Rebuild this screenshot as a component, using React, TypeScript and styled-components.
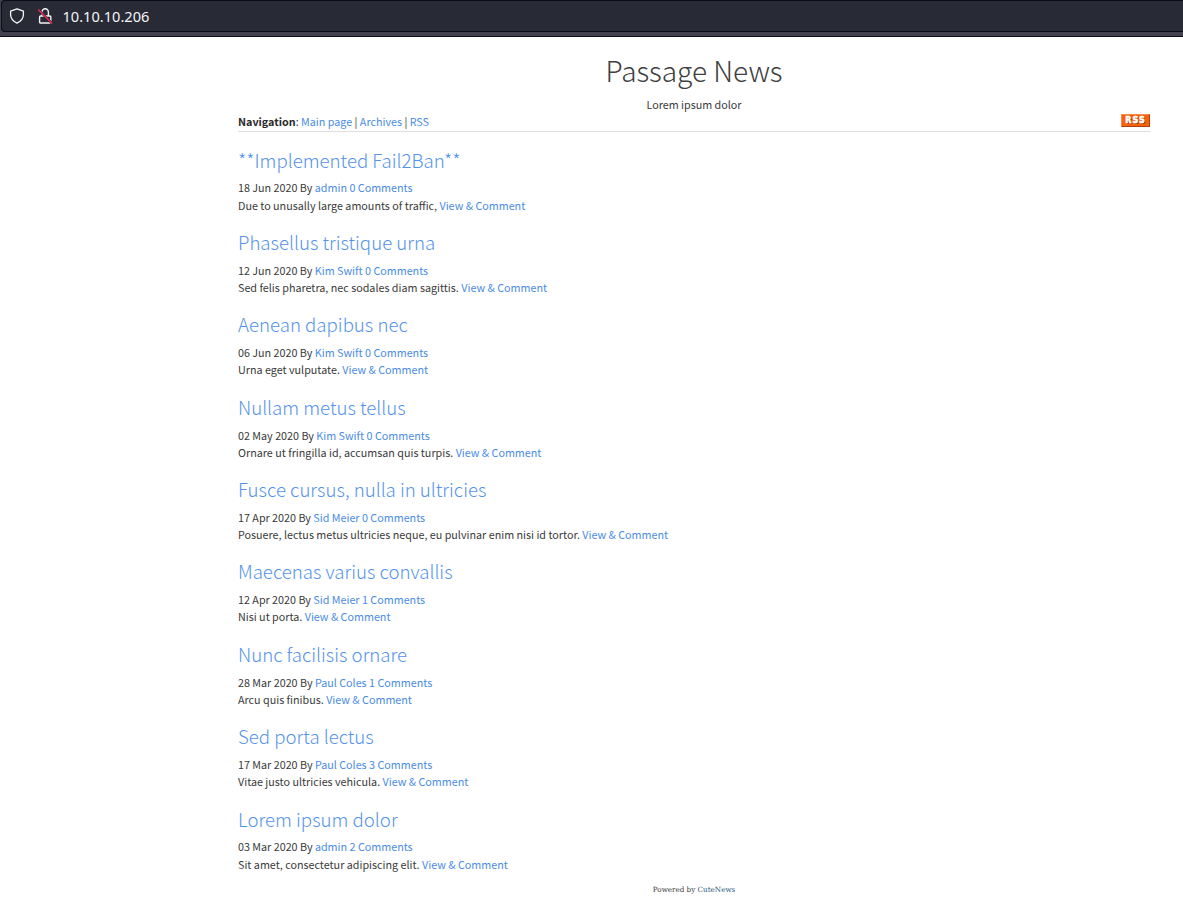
import React from 'react';
import styled, {createGlobalStyle} from 'styled-components';

const GlobalStyle = createGlobalStyle`
  * {
    box-sizing: border-box;
  }

  body {
    margin: 0;
    background: #fff;
    color: #3a3a3a;
    font: 400 10.75px/17.3px 'Noto Sans CJK JP', 'Open Sans', sans-serif;
  }
`;

const AddressBar = styled.div`
  height: 37px;
  padding-left: 1px;
  background: #42414d;
  border-bottom: 1px solid #0c0e1a;
`;

const AddressField = styled.div`
  display: flex;
  align-items: center;
  height: 32px;
  padding: 0 0 0 7px;
  background: #282a36;
  border: 1px solid #0a0c18;
  border-right: 0;
  border-radius: 4px 0 0 4px;
  color: #f4f4f6;
`;

const ShieldIcon = styled.svg`
  width: 16px;
  height: 16px;
`;

const LockIcon = styled.svg`
  width: 16px;
  height: 16px;
  margin: 0 9.5px 0 12px;
`;

const Address = styled.span`
  padding-bottom: 1px;
  font: 14.6px/20px 'Noto Sans', sans-serif;
`;

const Page = styled.main`
  width: 912px;
  margin-left: 238px;
`;

const Header = styled.header`
  padding-top: 13px;
  text-align: center;
`;

const SiteTitle = styled.h1`
  margin: 0;
  color: #404040;
  font-size: 28px;
  font-weight: 300;
  line-height: 40px;
`;

const Tagline = styled.p`
  margin: 6px 0 0;
`;

const Navigation = styled.nav`
  display: flex;
  justify-content: space-between;
  height: 19px;
  border-bottom: 1px solid #ddd;

  b {
    color: #2a2a2a;
  }
`;

const Link = styled.a`
  color: #4a8ce4;
  text-decoration: none;
`;

const RssBadge = styled.span`
  display: flex;
  align-items: center;
  justify-content: center;
  width: 29px;
  height: 13px;
  margin-top: 1px;
  padding-top: 1px;
  background: #f9610c;
  border: 1px solid;
  border-color: #f58a4c #a8440c #a8440c #f58a4c;
  color: #fff;
  font: 700 8px/10px 'DejaVu Sans', sans-serif;
  letter-spacing: 1px;
  text-shadow: 1px 1px 0 #8f3a0c;
  -webkit-text-stroke: 0.5px #fff;
`;

const News = styled.section`
  display: flex;
  flex-direction: column;
  gap: 13.19px;
  padding-top: 12.3px;
`;

const Article = styled.article``;

const ArticleTitle = styled.h2`
  margin: 0 0 4.845px;
  font-size: 18.65px;
  font-weight: 300;
  line-height: 30px;

  a {
    color: #5593ec;
  }
`;

const Line = styled.p`
  margin: 0;
  line-height: 17.175px;
  white-space: nowrap;
`;

const Footer = styled.footer`
  padding-top: 11.03px;
  text-align: center;
  font: 7.2px/12px 'DejaVu Serif', serif;

  a {
    color: #2b587a;
  }
`;

const articles = [
  {title: '**Implemented Fail2Ban**', date: '18 Jun 2020', author: 'admin', comments: 0, text: 'Due to unusally large amounts of traffic,'},
  {title: 'Phasellus tristique urna', date: '12 Jun 2020', author: 'Kim Swift', comments: 0, text: 'Sed felis pharetra, nec sodales diam sagittis.'},
  {title: 'Aenean dapibus nec', date: '06 Jun 2020', author: 'Kim Swift', comments: 0, text: 'Urna eget vulputate.'},
  {title: 'Nullam metus tellus', date: '02 May 2020', author: 'Kim Swift', comments: 0, text: 'Ornare ut fringilla id, accumsan quis turpis.'},
  {title: 'Fusce cursus, nulla in ultricies', date: '17 Apr 2020', author: 'Sid Meier', comments: 0, text: 'Posuere, lectus metus ultricies neque, eu pulvinar enim nisi id tortor.'},
  {title: 'Maecenas varius convallis', date: '12 Apr 2020', author: 'Sid Meier', comments: 1, text: 'Nisi ut porta.'},
  {title: 'Nunc facilisis ornare', date: '28 Mar 2020', author: 'Paul Coles', comments: 1, text: 'Arcu quis finibus.'},
  {title: 'Sed porta lectus', date: '17 Mar 2020', author: 'Paul Coles', comments: 3, text: 'Vitae justo ultricies vehicula.'},
  {title: 'Lorem ipsum dolor', date: '03 Mar 2020', author: 'admin', comments: 2, text: 'Sit amet, consectetur adipiscing elit.'},
];

const App = () => (
  <>
    <GlobalStyle />
    <AddressBar>
      <AddressField>
        <ShieldIcon viewBox="0 0 16 16" fill="none" stroke="currentColor" strokeWidth="1.3" strokeLinejoin="round">
          <path d="M8 .8 14.4 3.2v3.6c0 3.7-2.4 6.4-6.4 8.4-4-2-6.4-4.7-6.4-8.4V3.2z" />
        </ShieldIcon>
        <LockIcon viewBox="0 0 16 16" fill="none" stroke="currentColor" strokeWidth="1.4">
          <path d="M5 8V4a3.2 3.2 0 0 1 6.4 0v4" />
          <rect x="2.6" y="8" width="11.2" height="7" rx="1" />
          <path d="M1.2 1.5l14 14" stroke="#282a36" strokeWidth="2.4" />
          <path d="M1.2 1.5l14 14" stroke="#f02850" strokeWidth="1.5" />
        </LockIcon>
        <Address>10.10.10.206</Address>
      </AddressField>
    </AddressBar>
    <Page>
      <Header>
        <SiteTitle>Passage News</SiteTitle>
        <Tagline>Lorem ipsum dolor</Tagline>
      </Header>
      <Navigation>
        <div>
          <b>Navigation</b>: <Link>Main page</Link> | <Link>Archives</Link> | <Link>RSS</Link>
        </div>
        <RssBadge>RSS</RssBadge>
      </Navigation>
      <News>
        {articles.map(article => (
          <Article key={article.title}>
            <ArticleTitle>
              <Link>{article.title}</Link>
            </ArticleTitle>
            <Line>
              {article.date} By <Link>{article.author}</Link> <Link>{article.comments} Comments</Link>
            </Line>
            <Line>
              {article.text} <Link>View &amp; Comment</Link>
            </Line>
          </Article>
        ))}
      </News>
      <Footer>
        Powered by <Link>CuteNews</Link>
      </Footer>
    </Page>
  </>
);

export default App;
